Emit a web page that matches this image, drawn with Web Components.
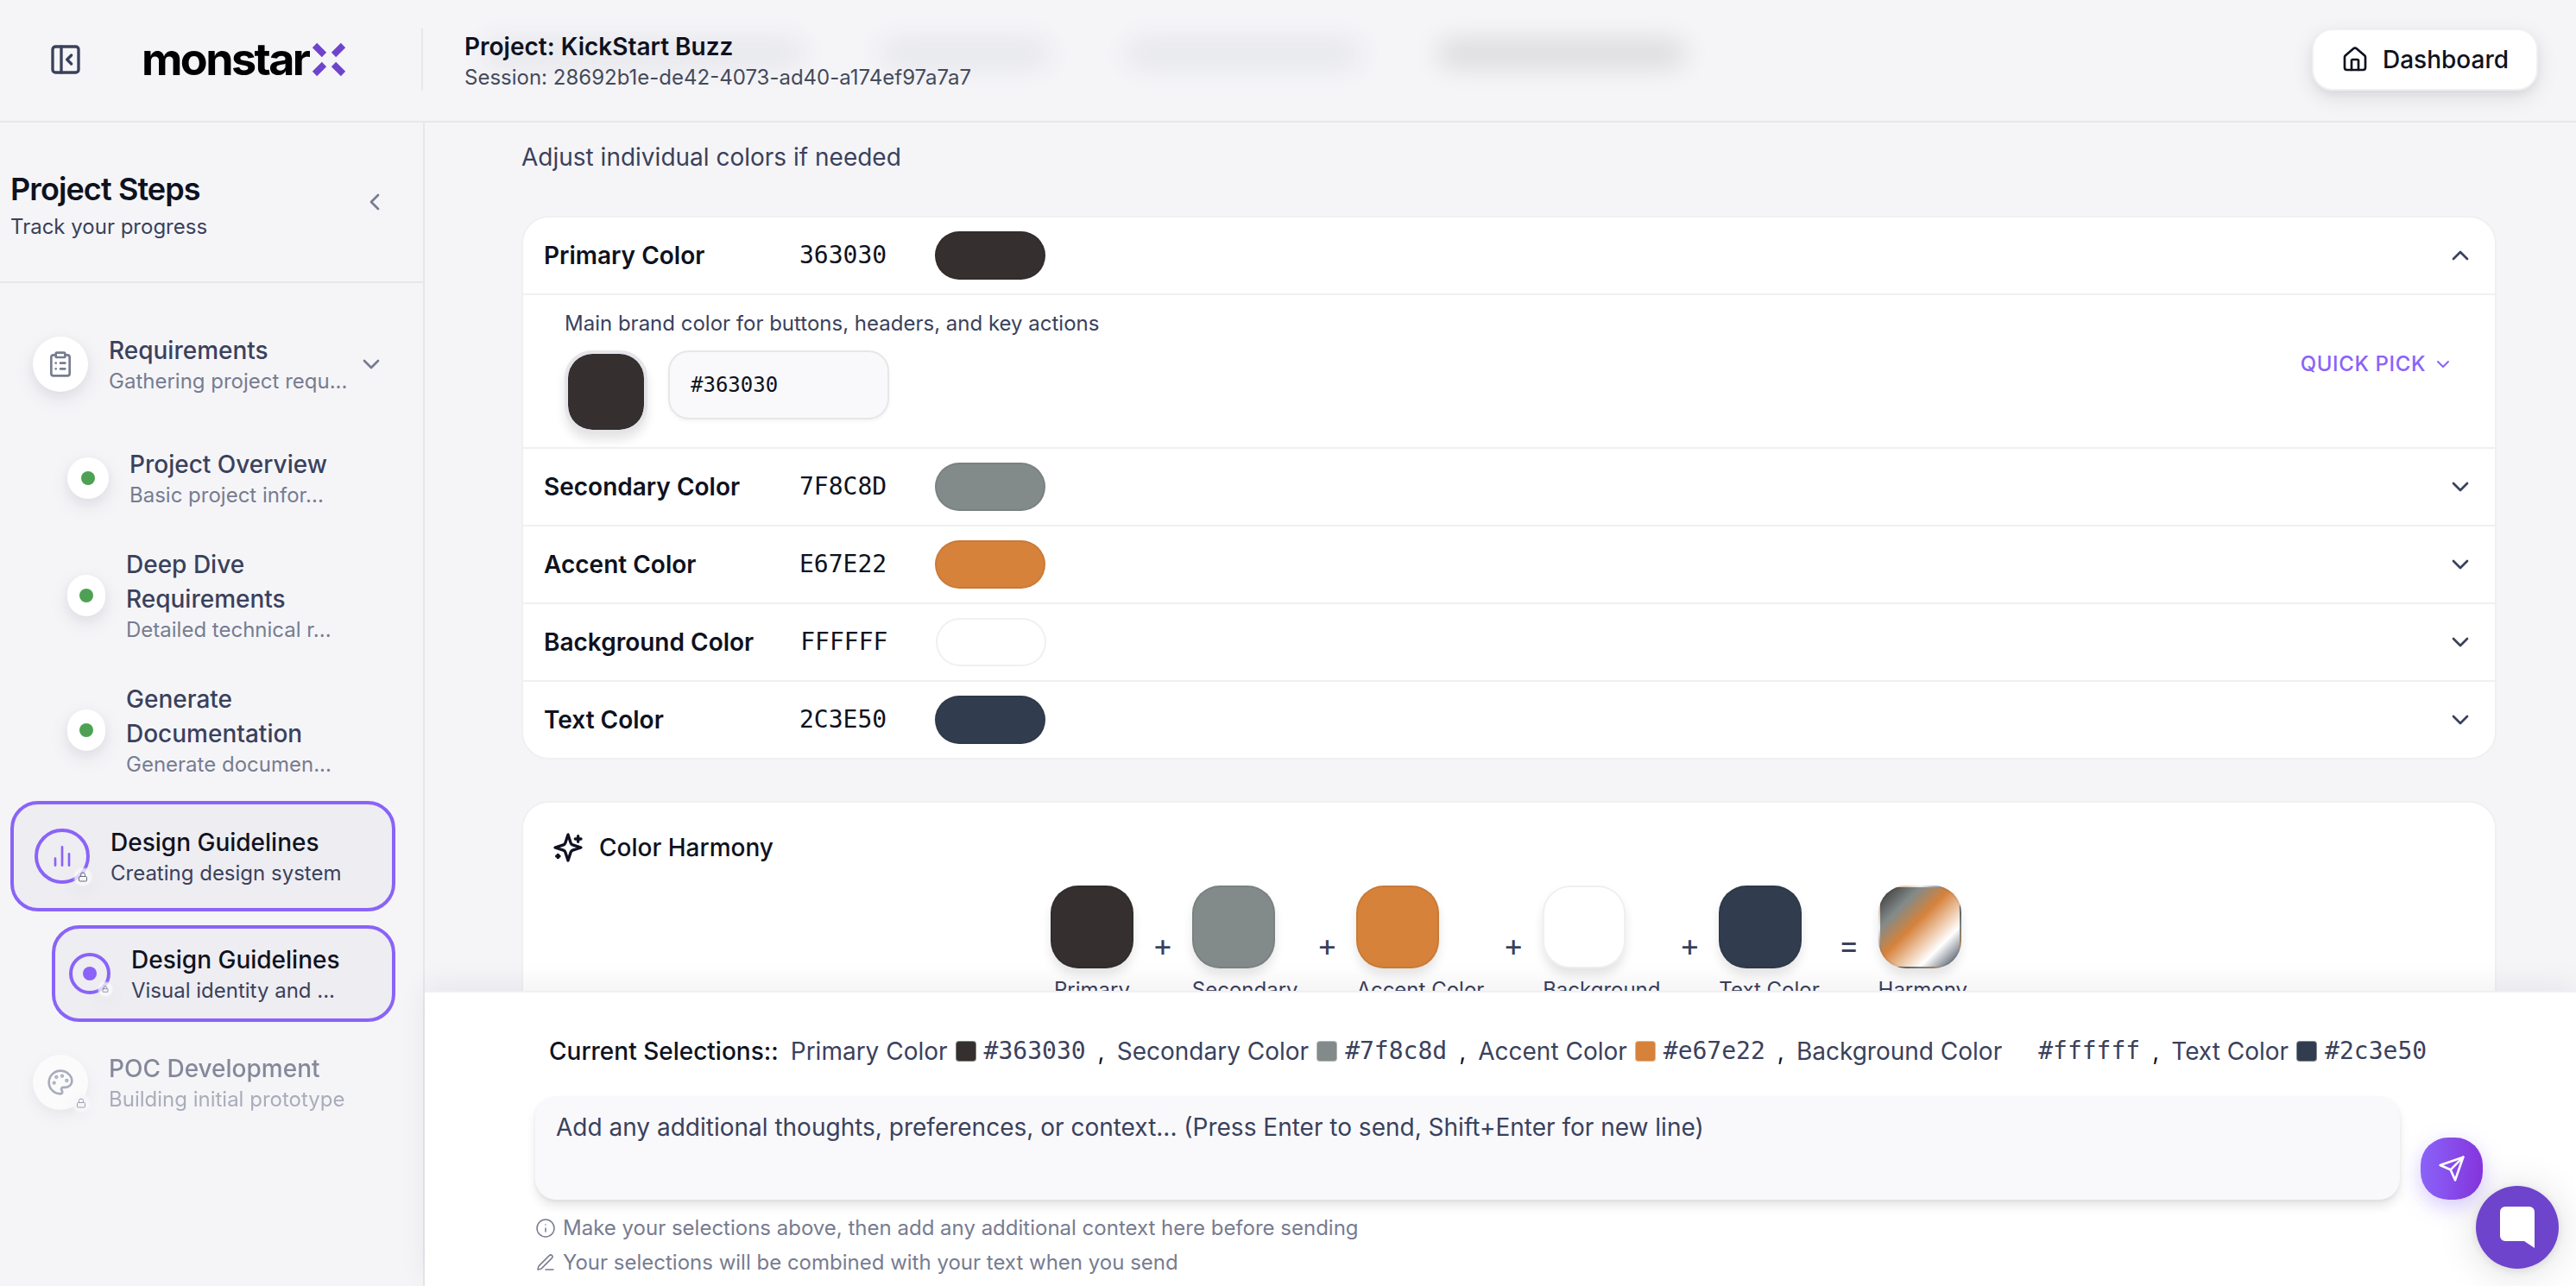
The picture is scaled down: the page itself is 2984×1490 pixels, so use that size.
<!DOCTYPE html>
<html lang="en">
<head>
<meta charset="utf-8">
<title>monstarx – Design Guidelines</title>
<style>
  :root {
    --ink: #0e1220;
    --slate: #3a415c;
    --muted: #777c91;
    --violet: #8a63f8;
    --brand: #6e44cc;
    --page: #f5f5f8;
    --line: #e7e7ea;
    --hair: #f0f0f1;
    --mono: "DejaVu Sans Mono", monospace;
  }
  body { margin: 0; background: var(--page); color: var(--ink); font: 28px/40px Inter, "Liberation Sans", sans-serif; }
</style>
</head>
<body>
<app-shell>
  <app-header slot="header" project="KickStart Buzz" session="28692b1e-de42-4073-ad40-a174ef97a7a7"></app-header>
  <step-sidebar slot="sidebar">
    <step-item icon="clipboard" label="Requirements" note="Gathering project requ..." expandable></step-item>
    <step-group>
      <step-item child label="Project Overview" note="Basic project infor..."></step-item>
      <step-item child narrow label="Deep Dive Requirements" note="Detailed technical r..."></step-item>
      <step-item child narrow label="Generate Documentation" note="Generate documen..."></step-item>
    </step-group>
    <step-item icon="bars" active lock label="Design Guidelines" note="Creating design system"></step-item>
    <step-group spaced>
      <step-item child active lock label="Design Guidelines" note="Visual identity and ..."></step-item>
    </step-group>
    <step-item icon="palette" disabled lock label="POC Development" note="Building initial prototype"></step-item>
  </step-sidebar>
  <color-editor slot="content"></color-editor>
  <color-harmony slot="content"></color-harmony>
  <prompt-panel slot="panel"></prompt-panel>
  <chat-bubble slot="float"></chat-bubble>
</app-shell>

<script>
const ICONS = {
  panel: '<rect x="3" y="3" width="18" height="18" rx="2"/><path d="M9 3v18"/><path d="m16 15-3-3 3-3"/>',
  left: '<path d="m15 18-6-6 6-6"/>',
  down: '<path d="m6 9 6 6 6-6"/>',
  up: '<path d="m18 15-6-6-6 6"/>',
  home: '<path d="M15 21v-8a1 1 0 0 0-1-1h-4a1 1 0 0 0-1 1v8"/><path d="M3 10a2 2 0 0 1 .709-1.528l7-5.999a2 2 0 0 1 2.582 0l7 5.999A2 2 0 0 1 21 10v9a2 2 0 0 1-2 2H5a2 2 0 0 1-2-2z"/>',
  clipboard: '<rect x="8" y="2" width="8" height="4" rx="1"/><path d="M16 4h2a2 2 0 0 1 2 2v14a2 2 0 0 1-2 2H6a2 2 0 0 1-2-2V6a2 2 0 0 1 2-2h2"/><path d="M12 11h4M12 16h4M8 11h.01M8 16h.01"/>',
  bars: '<path d="M18 20V10M12 20V4M6 20v-6"/>',
  palette: '<path d="M12 2C6.500 2 2 6.500 2 12s4.500 10 10 10c.926 0 1.648-.746 1.648-1.688 0-.437-.180-.835-.437-1.125-.290-.289-.438-.652-.438-1.125a1.640 1.640 0 0 1 1.668-1.668h1.996c3.051 0 5.555-2.503 5.555-5.554C21.965 6.012 17.461 2 12 2z"/><circle cx="13.500" cy="6.500" r=".6"/><circle cx="17.500" cy="10.500" r=".6"/><circle cx="8.500" cy="7.500" r=".6"/><circle cx="6.500" cy="12.500" r=".6"/>',
  lock: '<rect x="3" y="11" width="18" height="11" rx="2"/><path d="M7 11V7a5 5 0 0 1 10 0v4"/>',
  sparkles: '<path d="m12 3-1.912 5.813a2 2 0 0 1-1.275 1.275L3 12l5.813 1.912a2 2 0 0 1 1.275 1.275L12 21l1.912-5.813a2 2 0 0 1 1.275-1.275L21 12l-5.813-1.912a2 2 0 0 1-1.275-1.275L12 3Z"/><path d="M5 17v2M19 4v4M17 6h4M4 18h2"/>',
  info: '<circle cx="12" cy="12" r="10"/><path d="M12 16v-4M12 8h.01"/>',
  pen: '<path d="M12 20h9"/><path d="M16.376 3.622a1 1 0 0 1 3.002 3.002L7.368 18.635a2 2 0 0 1-.855.506l-2.872.838a.5.5 0 0 1-.62-.62l.838-2.872a2 2 0 0 1 .506-.854z"/>',
  send: '<path d="m22 2-7 20-4-9-9-4Z"/><path d="M22 2 11 13"/>'
};
const icon = (name, size, width = 2) =>
  `<svg class="icon" width="${size}" height="${size}" viewBox="0 0 24 24" fill="none" stroke="currentColor" stroke-width="${width}" stroke-linecap="round" stroke-linejoin="round" aria-hidden="true">${ICONS[name]}</svg>`;

const BASE = `
  *, *::before, *::after { box-sizing: border-box; }
  :host { display: block; box-sizing: border-box; }
  button { font: inherit; color: inherit; background: none; border: 0; padding: 0; margin: 0; cursor: pointer; }
  h1, h2, p { margin: 0; font: inherit; }
  .icon { display: block; flex: none; }
`;
const define = (name, render) => customElements.define(name, class extends HTMLElement {
  connectedCallback() {
    if (this.shadowRoot) return;
    this.attachShadow({ mode: 'open' }).innerHTML = render(this);
  }
});

const COLORS = [
  { name: 'Primary Color', short: 'Primary', hex: '#363030', paint: '#35302f' },
  { name: 'Secondary Color', short: 'Secondary', hex: '#7f8c8d', paint: '#828a8a' },
  { name: 'Accent Color', short: 'Accent Color', hex: '#e67e22', paint: '#d6823b' },
  { name: 'Background Color', short: 'Background', hex: '#ffffff', paint: '#ffffff' },
  { name: 'Text Color', short: 'Text Color', hex: '#2c3e50', paint: '#313d4e' }
];

define('app-shell', () => `<style>${BASE}
  :host { display: grid; grid-template: auto minmax(0, 1fr) / 492px minmax(0, 1fr); height: 100vh; overflow: hidden; }
  .top { grid-column: 1 / -1; }
  .main { display: flex; flex-direction: column; min-height: 0; }
  .scroll { flex: 1; min-height: 0; overflow: hidden; padding: 20px 92px 0 112px; }
  .panel { position: relative; }
</style>
<div class="top"><slot name="header"></slot></div>
<slot name="sidebar"></slot>
<main class="main">
  <div class="scroll"><slot name="content"></slot></div>
  <div class="panel"><slot name="panel"></slot></div>
</main>
<slot name="float"></slot>`);

define('app-header', el => `<style>${BASE}
  :host { position: relative; display: flex; align-items: center; height: 142px; padding: 0 44px 2px 56px; border-bottom: 2px solid var(--line); }
  .menu { color: var(--slate); }
  .logo { display: flex; align-items: center; gap: 4px; margin-left: 68px; width: 324px; color: #000; font-size: 52px; font-weight: 700; line-height: 60px; letter-spacing: -0.05em; }
  .title { padding: 2px 0 0 48px; border-left: 2px solid var(--line); height: 72px; display: flex; flex-direction: column; justify-content: center; }
  h1 { font-weight: 600; line-height: 40px; }
  .title p { font-size: 24px; line-height: 32px; color: #454a5a; }
  .home { margin-left: auto; display: flex; align-items: center; gap: 16px; height: 72px; padding: 0 32px; border: 2px solid var(--hair); border-radius: 24px; background: #fff; font-weight: 500; text-decoration: none; color: inherit; box-shadow: 0 8px 24px rgba(0,0,0,.10), 0 4px 8px rgba(0,0,0,.04); }
  .haze { position: absolute; inset: 0; z-index: -1; pointer-events: none; display: flex; align-items: center; gap: 92px; padding: 0 0 16px 560px; }
  .haze i { height: 28px; border-radius: 12px; background: #3a415c; opacity: .09; filter: blur(16px); }
  .haze .now { background: #000; opacity: .12; }
</style>
<div class="haze" aria-hidden="true"><i style="width:370px"></i><i style="width:192px"></i><i style="width:268px"></i><i class="now" style="width:286px"></i></div>
<button class="menu" aria-label="Collapse sidebar">${icon('panel', 40)}</button>
<div class="logo"><span>monstar</span>
  <svg width="40" height="40" viewBox="0 0 40 40" fill="none" stroke="#6e44cc" stroke-width="7.500" aria-label="x"><path d="M3.500 3.500 14.500 14.500M36.500 3.500 25.500 14.500M3.500 36.500 14.500 25.500M36.500 36.500 25.500 25.500"/></svg></div>
<div class="title"><h1>Project: ${el.getAttribute('project')}</h1><p>Session: ${el.getAttribute('session')}</p></div>
<a class="home" href="#dashboard">${icon('home', 32)}<span>Dashboard</span></a>`);

define('step-sidebar', () => `<style>${BASE}
  :host { border-right: 2px solid var(--line); overflow: hidden; }
  header { display: flex; align-items: center; justify-content: space-between; height: 186px; padding: 0 40px 0 12px; border-bottom: 2px solid var(--line); }
  .heading { padding-top: 10px; }
  h2 { font-size: 36px; font-weight: 600; line-height: 48px; letter-spacing: -0.025em; }
  p { font-size: 24px; line-height: 40px; color: var(--slate); }
  button { color: var(--muted); }
  nav { display: flex; flex-direction: column; gap: 8px; padding: 32px 32px 32px 12px; }
</style>
<header><div class="heading"><h2>Project Steps</h2><p>Track your progress</p></div><button aria-label="Collapse steps">${icon('left', 32)}</button></header>
<nav aria-label="Project steps"><slot></slot></nav>`);

define('step-group', () => `<style>${BASE}
  :host { display: flex; flex-direction: column; gap: 8px; padding: 8px 0 0 48px; }
</style><slot></slot>`);

define('step-item', el => {
  const has = n => el.hasAttribute(n);
  return `<style>${BASE}
  button { display: flex; align-items: center; gap: 24px; width: 100%; text-align: left; padding: 24px; border: 2px solid transparent; border-radius: 32px; color: var(--slate); }
  .mark { position: relative; display: flex; align-items: center; justify-content: center; flex: none; width: 64px; height: 64px; border-radius: 50%; background: #fff; color: var(--muted); box-shadow: 0 8px 24px rgba(20,20,50,.08), 0 4px 12px rgba(20,20,50,.05); }
  .text { flex: 1; min-width: 0; }
  .label { display: block; font-weight: 500; line-height: 40px; }
  .note { display: block; font-size: 24px; line-height: 32px; color: var(--muted); white-space: nowrap; }
  .caret { flex: none; color: var(--muted); margin: 0 -14px 0 -24px; }
  .dot { width: 16px; height: 16px; border-radius: 50%; background: #4ea154; }
  .badge { position: absolute; right: -2px; bottom: -2px; display: flex; align-items: center; justify-content: center; width: 20px; height: 20px; border-radius: 50%; background: rgba(250,250,252,.75); color: #666b7d; box-shadow: 0 0 3px rgba(255,255,255,.9), 0 8px 24px rgba(20,20,50,.06); }
  :host([child]) button { padding: 16px; }
  :host([child]) .mark { width: 48px; height: 48px; }
  :host([child]) .text { padding-right: 44px; }
  :host([child]) .badge { width: 16px; height: 16px; right: -6px; bottom: -6px; }
  :host([narrow]) .mark { width: 44px; border-radius: 24px; }
  :host([active]) button { border: 4px solid var(--violet); background: #eeedf2; color: var(--ink); }
  :host([active]) .note { color: var(--slate); }
  :host([active]) .mark { border: 4px solid var(--violet); background: none; color: var(--violet); box-shadow: none; }
  :host([active]) .dot { background: var(--violet); }
  :host([active]) .badge { right: -6px; bottom: -6px; }
  :host([disabled]) button { opacity: .6; }
</style>
<button${has('active') ? ' aria-current="step"' : ''}>
  <span class="mark">${has('child') ? '<span class="dot"></span>' : icon(el.getAttribute('icon'), 32)}${has('lock') ? `<span class="badge">${icon('lock', has('child') ? 8 : 12)}</span>` : ''}</span>
  <span class="text"><span class="label">${el.getAttribute('label')}</span><span class="note">${el.getAttribute('note')}</span></span>
  ${has('expandable') ? `<span class="caret">${icon('down', 32)}</span>` : ''}
</button>`;
});

define('color-editor', () => `<style>${BASE}
  .hint { color: var(--slate); margin-bottom: 48px; }
  color-row + color-row { border-top: 2px solid var(--hair); }
  .card { border: 2px solid var(--hair); border-radius: 32px; background: #fff; overflow: hidden; }
</style>
<p class="hint">Adjust individual colors if needed</p>
<div class="card">${COLORS.map((c, i) => `<color-row index="${i}"${i ? '' : ' open'}></color-row>`).join('')}</div>`);

define('color-row', el => {
  const c = COLORS[+el.getAttribute('index')];
  const open = el.hasAttribute('open');
  return `<style>${BASE}
  .head { display: flex; align-items: center; width: 100%; height: 88px; padding: 0 24px; text-align: left; }
  .name { flex: none; min-width: 296px; padding-right: 54px; font-weight: 600; }
  .hex { font-family: var(--mono); width: 157px; flex: none; }
  .pill { width: 128px; height: 56px; border-radius: 28px; border: 2px solid rgba(0,0,0,.06); }
  .caret { margin-left: auto; color: var(--slate); }
  .body { display: flex; justify-content: space-between; height: 178px; padding: 0 48px; border-top: 2px solid var(--hair); }
  .field { padding-top: 17px; }
  .desc { font-size: 24px; line-height: 32px; color: var(--slate); margin-bottom: 15px; display: block; }
  .inputs { display: flex; gap: 24px; align-items: flex-start; }
  input { font: 24px/32px var(--mono); color: var(--ink); border: 2px solid var(--line); }
  input[type=text] { width: 256px; height: 80px; padding: 0 24px; border-radius: 24px; background: #f9f9fb; box-shadow: 0 2px 4px rgba(0,0,0,.05); }
  input[type=color] { appearance: none; width: 96px; height: 96px; padding: 0; border: 4px solid #e5e5e9; border-radius: 32px; background: #e5e5e9; box-shadow: 0 8px 12px rgba(0,0,0,.10); overflow: hidden; }
  input[type=color]::-webkit-color-swatch-wrapper { padding: 0; }
  input[type=color]::-webkit-color-swatch { border: 0; border-radius: 28px; }
  .quick { display: flex; align-items: center; gap: 8px; height: 160px; color: var(--violet); font-size: 24px; font-weight: 500; line-height: 32px; letter-spacing: 0.025em; }
</style>
<button class="head" aria-expanded="${open}"><span class="name">${c.name}</span><span class="hex">${c.hex.slice(1).toUpperCase()}</span><span class="pill" style="background:${c.paint}"></span><span class="caret">${icon(open ? 'up' : 'down', 32)}</span></button>
${open ? `<div class="body"><div class="field"><label class="desc" for="hex">Main brand color for buttons, headers, and key actions</label>
<div class="inputs"><input type="color" value="${c.paint}" aria-label="${c.name}"><input type="text" id="hex" value="${c.hex}"></div></div>
<button class="quick"><span>QUICK PICK</span>${icon('down', 24)}</button></div>` : ''}`;
});

define('color-harmony', () => `<style>${BASE}
  :host { margin-top: 48px; border: 2px solid var(--hair); border-radius: 32px; background: #fff; padding: 32px 32px 48px; }
  h2 { display: flex; align-items: center; gap: 16px; height: 40px; font-weight: 500; }
  .mix { display: flex; justify-content: center; align-items: center; gap: 22px; margin-top: 24px; }
  .chip { display: flex; flex-direction: column; gap: 9px; font-size: 24px; line-height: 32px; color: var(--slate); text-align: center; }
  .chip i { display: block; width: 96px; height: 96px; border-radius: 32px; border: 2px solid rgba(0,0,0,.06); box-shadow: 0 8px 12px rgba(0,0,0,.10); }
  .op { font-size: 36px; color: var(--slate); }
  .blend { background: linear-gradient(135deg, #35302f, #828a8a 25%, #d6823b 45%, #fff 75%, #313d4e); }
</style>
<h2>${icon('sparkles', 40)}<span>Color Harmony</span></h2>
<div class="mix">${COLORS.map(c => `<div class="chip"><i style="background:${c.paint}"></i><span>${c.short}</span></div>`).join('<span class="op">+</span>')}<span class="op">=</span><div class="chip"><i class="blend"></i><span>Harmony</span></div></div>`);

define('prompt-panel', () => `<style>${BASE}
  :host { background: #fff; border-top: 2px solid var(--hair); padding: 48px 108px 0 128px; height: 342px; box-shadow: 0 -8px 32px rgba(20,20,50,.06); }
  .picks { display: flex; flex-wrap: wrap; gap: 14px; padding-left: 16px; }
  .picks strong { font-weight: 500; }
  .pick { display: flex; align-items: center; gap: 9px; color: var(--slate); }
  .pick i { width: 24px; height: 24px; border-radius: 4px; border: 1px solid rgba(255,255,255,.4); }
  .pick code { font-family: var(--mono); }
  .row { display: flex; align-items: flex-end; gap: 24px; margin-top: 32px; }
  textarea { flex: 1; height: 120px; padding: 16px 24px; border: 0; border-radius: 24px; resize: none; background: #f9f9fb; font: inherit; color: var(--ink); box-shadow: 0 8px 12px rgba(0,0,0,.09), 0 2px 4px rgba(0,0,0,.06); }
  textarea::placeholder { color: var(--slate); opacity: 1; }
  .send { display: flex; align-items: center; justify-content: center; width: 72px; height: 72px; border-radius: 32px; color: #fff; background: linear-gradient(90deg, #8a63f8, #8535dd); box-shadow: 0 8px 24px rgba(138,99,248,.35); }
  .tips { margin-top: 13px; font-size: 24px; line-height: 40px; color: var(--muted); }
  .tips p { display: flex; align-items: center; gap: 8px; }
</style>
<div class="picks"><strong>Current Selections::</strong>${COLORS.map(c => `<span class="pick"><span>${c.name}</span><i style="background:${c.paint}"></i><code>${c.hex}</code></span>`).join('<span>,</span>')}</div>
<div class="row"><textarea aria-label="Additional context" placeholder="Add any additional thoughts, preferences, or context... (Press Enter to send, Shift+Enter for new line)"></textarea>
<button class="send" aria-label="Send">${icon('send', 32)}</button></div>
<div class="tips"><p>${icon('info', 24, 1.5)}<span>Make your selections above, then add any additional context here before sending</span></p><p>${icon('pen', 24, 1.5)}<span>Your selections will be combined with your text when you send</span></p></div>`);

define('chat-bubble', () => `<style>${BASE}
  :host { position: fixed; right: 20px; bottom: 20px; }
  button { display: flex; align-items: center; justify-content: center; width: 96px; height: 96px; border-radius: 50%; background: var(--brand); box-shadow: 0 2px 12px rgba(0,0,0,.10), 0 4px 48px rgba(0,0,0,.14); }
</style><button aria-label="Open chat"><svg width="40" height="48" viewBox="0 0 40 48" fill="#fff"><path d="M6 0h28a6 6 0 0 1 6 6v42l-12-8H6a6 6 0 0 1-6-6V6a6 6 0 0 1 6-6Z"/></svg></button>`);
</script>
</body>
</html>
